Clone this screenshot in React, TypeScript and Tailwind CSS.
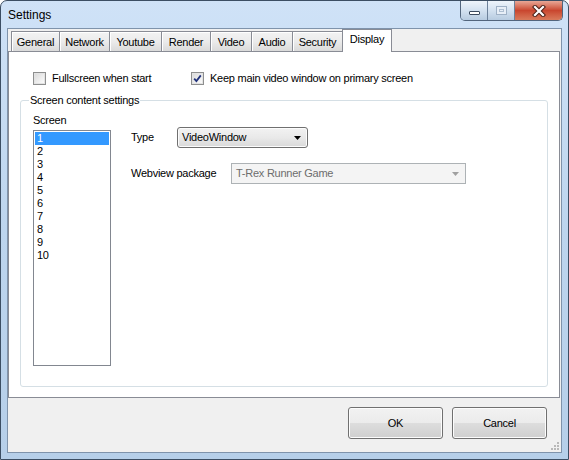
import React from "react";

const tabs = ["General", "Network", "Youtube", "Render", "Video", "Audio", "Security", "Display"];
const tabWidths = ["w-[48px]", "w-[50px]", "w-[52px]", "w-[49px]", "w-[41px]", "w-[41px]", "w-[50px]", "w-[50px]"];
const screens = ["1", "2", "3", "4", "5", "6", "7", "8", "9", "10"];

function CaptionButtons() {
  return (
    <div className="mr-[5px] flex h-[20px] overflow-hidden rounded-b-[5px] border border-t-0 border-[#52657d]">
      <div className="flex w-[27px] items-center justify-center border-r border-[#6d819a] bg-gradient-to-b from-[#eef4fb] via-[#d3e1f0] to-[#b7cbe0]">
        <div className="mt-[5px] h-[4px] w-[11px] rounded-[1px] border border-[#3b4a5e] bg-white" />
      </div>
      <div className="flex w-[27px] items-center justify-center border-r border-[#6d819a] bg-gradient-to-b from-[#eef4fb] via-[#d3e1f0] to-[#b7cbe0]">
        <div className="flex h-[9px] w-[11px] items-center justify-center border border-[#9fb1c6] bg-[#e7eef7]">
          <div className="h-[3px] w-[5px] border border-[#aebfd2]" />
        </div>
      </div>
      <div className="flex w-[47px] items-center justify-center bg-gradient-to-b from-[#e8a796] via-[#c9462f] to-[#d97a5b]">
        <svg width="14" height="12" viewBox="0 0 14 12">
          <path d="M3 2 L11 10 M11 2 L3 10" stroke="#4a2118" strokeWidth="4.2" strokeLinecap="square" />
          <path d="M3 2 L11 10 M11 2 L3 10" stroke="#ffffff" strokeWidth="2.2" strokeLinecap="square" />
        </svg>
      </div>
    </div>
  );
}

function CheckBox({ checked, label }: { checked?: boolean; label: string }) {
  return (
    <div className="flex items-center gap-[6px]">
      <div className="flex h-[13px] w-[13px] items-center justify-center border border-[#8e8f8f] bg-[#f4f4f4]">
        <div className="flex h-[11px] w-[11px] items-center justify-center border border-[#e3e3e3] bg-gradient-to-br from-[#dcdcdc] to-[#fbfbfb]">
          {checked ? (
            <svg width="9" height="9" viewBox="0 0 9 9">
              <path d="M1.2 4.6 L3.4 7 L7.8 1.4" fill="none" stroke="#21327b" strokeWidth="1.8" />
            </svg>
          ) : null}
        </div>
      </div>
      <span className="text-[11px] leading-[13px] text-black">{label}</span>
    </div>
  );
}

function Arrow({ color }: { color: string }) {
  return (
    <svg width="7" height="4" viewBox="0 0 7 4">
      <path d="M0 0 H7 L3.5 4 Z" fill={color} />
    </svg>
  );
}

export default function App() {
  return (
    <div className="flex h-[460px] w-[569px] flex-col rounded-t-[7px] border border-[#3c4e63] bg-gradient-to-b from-[#cfe2f7] via-[#bdd5ee] to-[#b6cfe9] font-['Liberation_Sans',Arial,sans-serif]">
      {/* title bar */}
      <div className="flex h-[27px] items-start justify-between">
        <div className="pl-[7px] pt-[7px] text-[12px] leading-[15px] text-black">Settings</div>
        <CaptionButtons />
      </div>

      {/* client area */}
      <div className="mx-[6px] mb-[6px] flex flex-1 flex-col border border-[#7f93ab] bg-[#f0f0f0] tracking-[-0.25px]">
        {/* tab strip */}
        <div className="relative z-10 flex h-[22px] items-end pl-[3px]">
          {tabs.map((t, i) =>
            t === "Display" ? (
              <div
                key={t}
                className={`${tabWidths[i]} -mb-px flex h-[23px] justify-center border border-b-0 border-[#898c95] bg-white pt-[3px] text-[11px] leading-[13px] text-black`}
              >
                {t}
              </div>
            ) : (
              <div
                key={t}
                className={`${tabWidths[i]} flex h-[20px] justify-center border border-b-0 border-r-0 border-[#898c95] bg-gradient-to-b from-[#f3f3f3] via-[#ebebeb] to-[#dadada] pt-[4px] text-[11px] leading-[13px] text-black shadow-[inset_1px_1px_0_#ffffff]`}
              >
                {t}
              </div>
            )
          )}
        </div>

        {/* tab page */}
        <div className="mr-px flex h-[347px] flex-col border border-[#898c95] bg-white">
          <div className="flex pl-[24px] pt-[20px]">
            <div className="w-[158px]">
              <CheckBox label="Fullscreen when start" />
            </div>
            <CheckBox checked label="Keep main video window on primary screen" />
          </div>

          {/* group box */}
          <div className="relative ml-[11px] mt-[15px] h-[287px] w-[528px] rounded-[3px] border border-[#d5dfe5]">
            <span className="absolute left-[8px] top-[-7px] bg-white px-px text-[11px] leading-[13px] text-black">
              Screen content settings
            </span>
            <div className="flex pl-[12px] pt-[13px]">
              <div className="flex flex-col">
                <span className="text-[11px] leading-[13px] text-black">Screen</span>
                <div className="mt-[3px] h-[236px] w-[78px] border border-[#828790] bg-white p-px">
                  {screens.map((s, i) => (
                    <div
                      key={s}
                      className={`h-[13px] pl-[2px] text-[11px] leading-[13px] ${
                        i === 0 ? "bg-[#3399ff] text-white" : "text-black"
                      }`}
                    >
                      {s}
                    </div>
                  ))}
                </div>
              </div>

              <div className="ml-[20px] flex flex-col pt-[13px]">
                <div className="flex items-center">
                  <span className="w-[46px] text-[11px] leading-[13px] text-black">Type</span>
                  <div className="flex h-[21px] w-[131px] items-center justify-between rounded-[3px] border border-[#707070] bg-gradient-to-b from-[#f2f2f2] via-[#e9e9e9] to-[#d9d9d9] pl-[4px] pr-[6px] shadow-[inset_0_0_0_1px_#fcfcfc]">
                    <span className="text-[11px] leading-[13px] text-black">VideoWindow</span>
                    <Arrow color="#000000" />
                  </div>
                </div>
                <div className="mt-[15px] flex items-center">
                  <span className="w-[100px] text-[11px] leading-[13px] text-black">Webview package</span>
                  <div className="flex h-[21px] w-[235px] items-center justify-between border border-[#adb2b5] bg-[#f4f4f4] pl-[4px] pr-[6px]">
                    <span className="text-[11px] leading-[13px] text-[#6d6d6d]">T-Rex Runner Game</span>
                    <Arrow color="#a0a0a0" />
                  </div>
                </div>
              </div>
            </div>
          </div>
        </div>

        {/* buttons */}
        <div className="relative flex flex-1 items-start justify-end gap-[9px] pr-[14px] pt-[9px]">
          <div className="flex h-[32px] w-[95px] items-center justify-center rounded-[3px] border border-[#707070] bg-[linear-gradient(#f2f2f2_0%,#ebebeb_50%,#dddddd_51%,#cfcfcf_100%)] text-[11px] text-black shadow-[inset_0_0_0_1px_#fcfcfc]">
            OK
          </div>
          <div className="flex h-[32px] w-[95px] items-center justify-center rounded-[3px] border border-[#707070] bg-[linear-gradient(#f2f2f2_0%,#ebebeb_50%,#dddddd_51%,#cfcfcf_100%)] text-[11px] text-black shadow-[inset_0_0_0_1px_#fcfcfc]">
            Cancel
          </div>
          <svg className="absolute bottom-[1px] right-[1px]" width="10" height="10" viewBox="0 0 10 10">
            <g fill="#b8b8b8">
              <rect x="7" y="1" width="2" height="2" />
              <rect x="4" y="4" width="2" height="2" />
              <rect x="7" y="4" width="2" height="2" />
              <rect x="1" y="7" width="2" height="2" />
              <rect x="4" y="7" width="2" height="2" />
              <rect x="7" y="7" width="2" height="2" />
            </g>
          </svg>
        </div>
      </div>
    </div>
  );
}
